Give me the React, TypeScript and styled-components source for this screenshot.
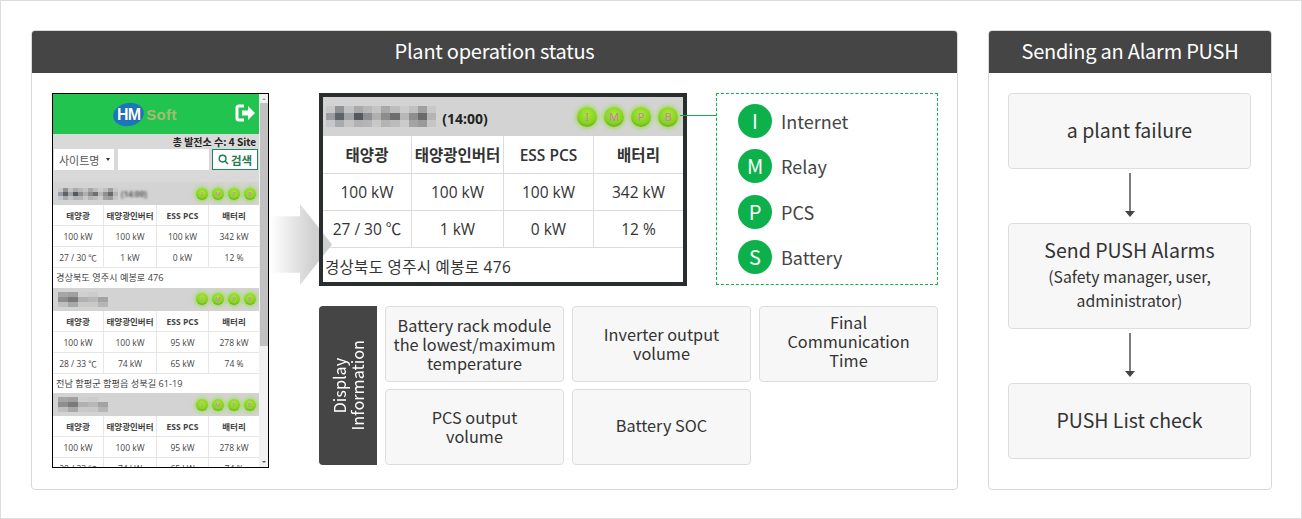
import styled, { createGlobalStyle } from "styled-components"

const GlobalStyle = createGlobalStyle`
    html, body {
        margin: 0;
        padding: 0;
        background: #fff;
    }
    * {
        box-sizing: border-box;
    }
    body {
        font-family: "Noto Sans CJK KR", "Noto Sans", sans-serif;
        color: #333;
    }
`

const Frame = styled.div`
    display: flex;
    gap: 30px;
    width: 1302px;
    height: 519px;
    padding: 29px 29px 28px 30px;
    border: 1px solid #ddd;
`

const Panel = styled.section<{ $width: number }>`
    display: flex;
    flex-direction: column;
    width: ${(p) => p.$width}px;
    border: 1px solid #d8d8d8;
    border-radius: 4px;
    overflow: hidden;
`

const PanelTitle = styled.h2`
    margin: -1px -1px 0;
    height: 43px;
    flex: none;
    background: #454545;
    color: #fff;
    font-size: 20px;
    font-weight: 400;
    line-height: 41px;
    text-align: center;
    letter-spacing: -0.25px;
`

const StatusBody = styled.div`
    display: flex;
    gap: 50px;
    padding: 20px 19px 0 20px;
`

/* phone capture */
const Phone = styled.div`
    display: flex;
    flex: none;
    width: 217px;
    height: 375px;
    border: 1px solid #000;
    overflow: hidden;
    background: #fff;
`

const PhoneScreen = styled.div`
    width: 206px;
    flex: none;
    height: 100%;
    overflow: hidden;
`

const PhoneBar = styled.div`
    display: flex;
    align-items: center;
    justify-content: center;
    position: relative;
    height: 40px;
    background: #22c450;
`

const LogoMark = styled.div`
    display: flex;
    align-items: center;
    margin-left: -22px;
    font-family: "Liberation Sans", sans-serif;
    font-weight: 700;
`

const LogoOval = styled.span`
    display: flex;
    align-items: center;
    justify-content: center;
    width: 31px;
    height: 23px;
    background: #1d75bc;
    border-radius: 50%;
    transform: rotate(-12deg);
    & > b {
        transform: rotate(12deg);
        color: #fff;
        font-size: 16px;
        letter-spacing: -1px;
        text-shadow: 0 0 1px #0d3f78;
    }
`

const LogoSoft = styled.span`
    margin-left: 2px;
    color: #a3bd70;
    font-size: 15px;
    letter-spacing: 0.3px;
`

const ExitButton = styled.svg`
    position: absolute;
    right: 3px;
    top: 9px;
`

const PhoneCount = styled.div`
    height: 15px;
    padding-right: 3px;
    background: #d9d9d9;
    color: #222;
    font-size: 10px;
    font-weight: 700;
    line-height: 15px;
    text-align: right;
`

const SearchRow = styled.div`
    display: flex;
    align-items: stretch;
    height: 33px;
    padding: 0 1px 12px 1px;
    background: #d9d9d9;
`

const SiteSelect = styled.div`
    display: flex;
    align-items: center;
    justify-content: space-between;
    width: 60px;
    padding: 0 4px 0 5px;
    background: #fff;
    font-size: 11px;
    color: #555;
    &::after {
        content: "";
        border-left: 2px solid transparent;
        border-right: 2px solid transparent;
        border-top: 3px solid #333;
    }
`

const SearchInput = styled.div`
    width: 91px;
    margin-left: 4px;
    background: #fff;
`

const SearchButton = styled.div`
    display: flex;
    align-items: center;
    justify-content: center;
    gap: 2px;
    width: 46px;
    margin-left: 3px;
    background: #fff;
    border: 1px solid #1f8a5a;
    color: #1f7a50;
    font-size: 11.5px;
    font-weight: 700;
`

const SiteHead = styled.div<{ $tall?: boolean }>`
    display: flex;
    align-items: center;
    justify-content: space-between;
    height: ${(p) => (p.$tall ? 39 : 23)}px;
    padding: ${(p) => (p.$tall ? "0 5px 0 3px" : "0 3px 0 5px")};
    background: #d3d3d3;
`

const HeadName = styled.div`
    display: flex;
    align-items: flex-end;
    gap: 6px;
`

const Clock = styled.span`
    color: #222;
    font-size: 14px;
    font-weight: 700;
    font-family: "Noto Sans", sans-serif;
    line-height: 16px;
`

const BlurredClock = styled.span`
    color: #555;
    font-size: 8px;
    font-weight: 700;
    font-family: "Noto Sans", sans-serif;
    filter: blur(1px);
`

const PhoneName = styled.div`
    display: flex;
    align-items: center;
    gap: 3px;
`

const Mosaic = styled.div<{ $width: number; $height: number }>`
    display: grid;
    grid-auto-flow: column;
    grid-template-rows: repeat(3, ${(p) => p.$height}px);
    grid-auto-columns: ${(p) => p.$width}px;
    filter: blur(${(p) => (p.$height > 6 ? 0.5 : 0.6)}px);
`

const Tile = styled.i<{ $shade: string }>`
    display: block;
    background: ${(p) => p.$shade};
`

const Lights = styled.div<{ $size: number }>`
    display: flex;
    gap: ${(p) => (p.$size > 12 ? 7 : 4)}px;
    font-size: ${(p) => (p.$size > 12 ? 11 : 6)}px;
    & > span {
        width: ${(p) => p.$size}px;
        height: ${(p) => p.$size}px;
    }
`

const Light = styled.span`
    display: flex;
    align-items: center;
    justify-content: center;
    border-radius: 50%;
    background: radial-gradient(circle at 50% 35%, #a8ea34 0%, #86d222 58%, #4d8a10 100%);
    box-shadow: 0 0 4px 1px #95e040;
    color: #cf78c4;
    font-family: "Noto Sans", sans-serif;
`

const SiteGrid = styled.div<{ $columns: string; $line: string }>`
    display: grid;
    grid-template-columns: ${(p) => p.$columns};
    gap: 1px;
    background: ${(p) => p.$line};
    border-bottom: 1px solid ${(p) => p.$line};
`

const PhoneCell = styled.div<{ $strong?: boolean }>`
    height: 20px;
    background: #fff;
    color: #444;
    font-family: "Open Sans", "Noto Sans CJK KR", sans-serif;
    font-size: 8.5px;
    font-weight: ${(p) => (p.$strong ? 700 : 400)};
    line-height: 21px;
    text-align: center;
    white-space: nowrap;
`

const PhoneAddress = styled.div`
    height: 19.5px;
    padding-left: 3px;
    background: #fff;
    color: #444;
    font-family: "Open Sans", "Noto Sans CJK KR", sans-serif;
    font-size: 9.2px;
    line-height: 19px;
    white-space: nowrap;
`

/* right side of the status panel */
const Detail = styled.div`
    display: flex;
    flex-direction: column;
    gap: 20px;
    width: 619px;
`

const DetailTop = styled.div`
    display: flex;
    justify-content: space-between;
    position: relative;
    height: 193px;
`

const LiveCard = styled.div`
    position: relative;
    width: 368px;
    height: 193px;
    padding: 4px;
    background: #fff;
    &::after {
        content: "";
        position: absolute;
        inset: 0;
        border: 4px solid #2a2e2f;
        z-index: 2;
    }
`

const LiveCell = styled.div<{ $strong?: boolean }>`
    height: ${(p) => (p.$strong ? 37 : 36)}px;
    background: #fff;
    color: #333;
    font-family: "Open Sans", "Noto Sans CJK KR", sans-serif;
    font-size: 15.5px;
    font-weight: ${(p) => (p.$strong ? 600 : 400)};
    line-height: ${(p) => (p.$strong ? 38 : 36)}px;
    text-align: center;
    white-space: nowrap;
`

const LiveAddress = styled.div`
    height: 35px;
    padding-left: 2px;
    color: #333;
    font-family: "Open Sans", "Noto Sans CJK KR", sans-serif;
    font-size: 15.5px;
    letter-spacing: 0.3px;
    line-height: 38px;
    white-space: nowrap;
`

const Arrow = styled.div`
    position: absolute;
    left: -49px;
    top: 111px;
    width: 62px;
    height: 81px;
    background: linear-gradient(90deg, #fff 0%, #d0d0d0 70%, #cfcfcf 100%);
    clip-path: polygon(0 15%, 30px 15%, 30px 0, 100% 50%, 30px 100%, 30px 85%, 0 85%);
    z-index: 1;
`

const Connector = styled.div`
    position: absolute;
    left: 361px;
    top: 22px;
    width: 36px;
    height: 1px;
    background: #0db14b;
    z-index: 3;
`

const Legend = styled.div`
    display: flex;
    flex-direction: column;
    gap: 11.4px;
    width: 222px;
    height: 192px;
    padding: 10px 21px;
    border: 1px dashed #0db14b;
`

const LegendRow = styled.div`
    display: flex;
    align-items: center;
    gap: 9px;
    color: #444;
    font-size: 18px;
    line-height: 34px;
`

const LegendBadge = styled.span`
    display: flex;
    align-items: center;
    justify-content: center;
    width: 34px;
    height: 34px;
    border-radius: 50%;
    background: #0db14b;
    color: #fff;
    font-size: 20px;
`

const InfoBlock = styled.div`
    display: flex;
    gap: 8px;
    height: 159px;
`

const InfoTab = styled.div`
    display: flex;
    align-items: center;
    justify-content: center;
    width: 58px;
    flex: none;
    background: #454545;
    border-radius: 4px 0 0 4px;
    color: #fff;
    font-size: 16.3px;
    line-height: 18px;
    text-align: center;
    & > span {
        writing-mode: vertical-rl;
        transform: rotate(180deg);
    }
`

const InfoGrid = styled.div`
    display: grid;
    grid-template-columns: repeat(3, 179px);
    grid-template-rows: 76px 76px;
    column-gap: 8px;
    row-gap: 7px;
`

const Box = styled.div<{ $size?: number; $height?: number; $lift?: number }>`
    display: flex;
    flex-direction: column;
    align-items: center;
    justify-content: center;
    ${(p) => (p.$height ? `height: ${p.$height}px; width: 100%;` : "")}
    padding: 0 4px ${(p) => p.$lift ?? 0}px;
    background: #f7f7f7;
    border: 1px solid #ddd;
    border-radius: 4px;
    color: #333;
    font-size: ${(p) => p.$size ?? 16.3}px;
    line-height: 19px;
    text-align: center;
    white-space: nowrap;
`

/* alarm panel */
const AlarmBody = styled.div`
    display: flex;
    flex-direction: column;
    align-items: center;
    padding: 20px 20px 0 19px;
`

const BoxSmall = styled.small`
    display: block;
    margin-top: 3px;
    font-size: 15.8px;
    line-height: 24px;
`

const BoxLead = styled.span`
    line-height: 24px;
`

const DownArrow = styled.svg`
    display: block;
    flex: none;
    margin: 4px 0 6px;
`

const statusShades = [
    ["#c9c9c9", "#8f9396", "#c3c3c3", "#aaaaaa", "#b8b8b8", "#c4c4c4", "#a8a8a8", "#bdbdbd", "#cccccc", "#c0c0c0", "#a0a0a0", "#c8c8c8"],
    ["#9a9ea2", "#5f6468", "#a1a5a9", "#55585c", "#8c8f93", "#b0b0b0", "#8c8c8c", "#6f6f6f", "#b7b7b7", "#8f8f8f", "#6a6a6a", "#b4b4b4"],
    ["#c4c8ca", "#a7abb0", "#c4c4c4", "#b2b2b2", "#b5b5b5", "#c8c8c8", "#b4b4b4", "#bcbcbc", "#cbcbcb", "#a3a3a3", "#9a9a9a", "#c6c6c6"],
]

const blockShades = [
    ["#a6a6a6", "#a0a0a0", "#cfcfcf", "#cccccc", "#d3d3d3"],
    ["#8e8e8e", "#7a7a7a", "#b0b0b0", "#b8b8b8", "#a3a3a3"],
    ["#bfbfbf", "#a8a8a8", "#c9c9c9", "#c8c8c8", "#b5b5b5"],
]

const SiteName: React.FC<{ shades: string[][]; width: number; height: number }> = ({ shades, width, height }) => (
    <Mosaic $width={width} $height={height}>
        {shades[0].map((_, col) =>
            shades.map((row, r) => <Tile key={`${col}-${r}`} $shade={row[col]} />)
        )}
    </Mosaic>
)

const phoneHeads = ["태양광", "태양광인버터", "ESS PCS", "배터리"]

const sites = [
    {
        shades: statusShades,
        width: 5,
        height: 4,
        clock: "(14:00)",
        rows: [["100 kW", "100 kW", "100 kW", "342 kW"], ["27 / 30 ℃", "1 kW", "0 kW", "12 %"]],
        address: "경상북도 영주시 예봉로 476",
    },
    {
        shades: blockShades,
        width: 10,
        height: 5,
        clock: "",
        rows: [["100 kW", "100 kW", "95 kW", "278 kW"], ["28 / 33 ℃", "74 kW", "65 kW", "74 %"]],
        address: "전남 함평군 함평읍 성북길 61-19",
    },
    {
        shades: blockShades,
        width: 10,
        height: 5,
        clock: "",
        rows: [["100 kW", "100 kW", "95 kW", "278 kW"], ["28 / 33 ℃", "74 kW", "65 kW", "74 %"]],
        address: "",
    },
]

const lightLetters = ["I", "M", "P", "B"]

const ScrollTrack = styled.div`
    position: relative;
    flex: none;
    width: 10px;
    height: 100%;
    background: #f1f1f1;
`

const ScrollThumb = styled.div`
    position: absolute;
    left: 1px;
    right: 0;
    top: 9px;
    height: 243px;
    background: #c1c1c1;
`

const ScrollCaret = styled.i<{ $down?: boolean }>`
    position: absolute;
    left: 3px;
    ${(p) => (p.$down ? "bottom: 4px;" : "top: 4px;")}
    border-left: 2px solid transparent;
    border-right: 2px solid transparent;
    ${(p) => (p.$down ? "border-top: 2px solid #555;" : "border-bottom: 2px solid #a3a3a3;")}
`

const App = () => {
    return (
        <>
            <GlobalStyle />
            <Frame>
                <Panel $width={927}>
                    <PanelTitle>Plant operation status</PanelTitle>
                    <StatusBody>
                        <Phone>
                            <PhoneScreen>
                                <PhoneBar>
                                    <LogoMark>
                                        <LogoOval><b>HM</b></LogoOval>
                                        <LogoSoft>Soft</LogoSoft>
                                    </LogoMark>
                                    <ExitButton width="21" height="20" viewBox="0 0 21 20">
                                        <path d="M9 3H4a2 2 0 0 0-2 2v10a2 2 0 0 0 2 2h5" fill="none" stroke="#fff" strokeWidth="3" />
                                        <path d="M7 7.5h6V3l7 7-7 7v-4.5H7z" fill="#fff" />
                                    </ExitButton>
                                </PhoneBar>
                                <PhoneCount>총 발전소 수: 4 Site</PhoneCount>
                                <SearchRow>
                                    <SiteSelect>사이트명</SiteSelect>
                                    <SearchInput />
                                    <SearchButton>
                                        <svg width="11" height="11" viewBox="0 0 11 11">
                                            <circle cx="4.6" cy="4.6" r="3.4" fill="none" stroke="#1f7a50" strokeWidth="1.4" />
                                            <path d="M7 7l3 3" stroke="#1f7a50" strokeWidth="1.6" />
                                        </svg>
                                        검색
                                    </SearchButton>
                                </SearchRow>
                                {sites.map((site, i) => (
                                    <div key={i}>
                                        <SiteHead>
                                            <PhoneName>
                                                <SiteName shades={site.shades} width={site.width} height={site.height} />
                                                {site.clock && <BlurredClock>{site.clock}</BlurredClock>}
                                            </PhoneName>
                                            <Lights $size={12}>
                                                {lightLetters.map((l) => <Light key={l}>{l}</Light>)}
                                            </Lights>
                                        </SiteHead>
                                        <SiteGrid $columns="50px 52px 51px 1fr" $line="#e6e6e6">
                                            {phoneHeads.map((h) => <PhoneCell key={h} $strong>{h}</PhoneCell>)}
                                            {site.rows.flat().map((v, j) => <PhoneCell key={j}>{v}</PhoneCell>)}
                                        </SiteGrid>
                                        {site.address && <PhoneAddress>{site.address}</PhoneAddress>}
                                    </div>
                                ))}
                            </PhoneScreen>
                            <ScrollTrack>
                                <ScrollCaret />
                                <ScrollThumb />
                                <ScrollCaret $down />
                            </ScrollTrack>
                        </Phone>
                        <Detail>
                            <DetailTop>
                                <LiveCard>
                                    <SiteHead $tall>
                                        <HeadName>
                                            <SiteName shades={statusShades} width={9.2} height={7} />
                                            <Clock>(14:00)</Clock>
                                        </HeadName>
                                        <Lights $size={20}>
                                            {lightLetters.map((l) => <Light key={l}>{l}</Light>)}
                                        </Lights>
                                    </SiteHead>
                                    <SiteGrid $columns="88px 91px 89px 1fr" $line="#dcdcdc">
                                        {phoneHeads.map((h) => <LiveCell key={h} $strong>{h}</LiveCell>)}
                                        {sites[0].rows.flat().map((v, j) => <LiveCell key={j}>{v}</LiveCell>)}
                                    </SiteGrid>
                                    <LiveAddress>경상북도 영주시 예봉로 476</LiveAddress>
                                    <Arrow />
                                </LiveCard>
                                <Connector />
                                <Legend>
                                    <LegendRow><LegendBadge>I</LegendBadge>Internet</LegendRow>
                                    <LegendRow><LegendBadge>M</LegendBadge>Relay</LegendRow>
                                    <LegendRow><LegendBadge>P</LegendBadge>PCS</LegendRow>
                                    <LegendRow><LegendBadge>S</LegendBadge>Battery</LegendRow>
                                </Legend>
                            </DetailTop>
                            <InfoBlock>
                                <InfoTab><span>Display<br />Information</span></InfoTab>
                                <InfoGrid>
                                    <Box>Battery rack module<br />the lowest/maximum<br />temperature</Box>
                                    <Box>Inverter output<br />volume</Box>
                                    <Box $lift={6}>Final<br />Communication<br />Time</Box>
                                    <Box>PCS output<br />volume</Box>
                                    <Box $lift={4}>Battery SOC</Box>
                                </InfoGrid>
                            </InfoBlock>
                        </Detail>
                    </StatusBody>
                </Panel>
                <Panel $width={284}>
                    <PanelTitle>Sending an Alarm PUSH</PanelTitle>
                    <AlarmBody>
                        <Box $size={19.5} $height={76} $lift={4}>a plant failure</Box>
                        <DownArrow width="10" height="44" viewBox="0 0 10 44">
                            <path d="M5 0v38" stroke="#444" strokeWidth="1.4" />
                            <path d="M0 38h10l-5 6z" fill="#444" />
                        </DownArrow>
                        <Box $size={19.5} $height={106} $lift={2}>
                            <BoxLead>Send PUSH Alarms</BoxLead>
                            <BoxSmall>(Safety manager, user,<br />administrator)</BoxSmall>
                        </Box>
                        <DownArrow width="10" height="44" viewBox="0 0 10 44">
                            <path d="M5 0v38" stroke="#444" strokeWidth="1.4" />
                            <path d="M0 38h10l-5 6z" fill="#444" />
                        </DownArrow>
                        <Box $size={19.5} $height={76} $lift={4}>PUSH List check</Box>
                    </AlarmBody>
                </Panel>
            </Frame>
        </>
    )
}

export default App
